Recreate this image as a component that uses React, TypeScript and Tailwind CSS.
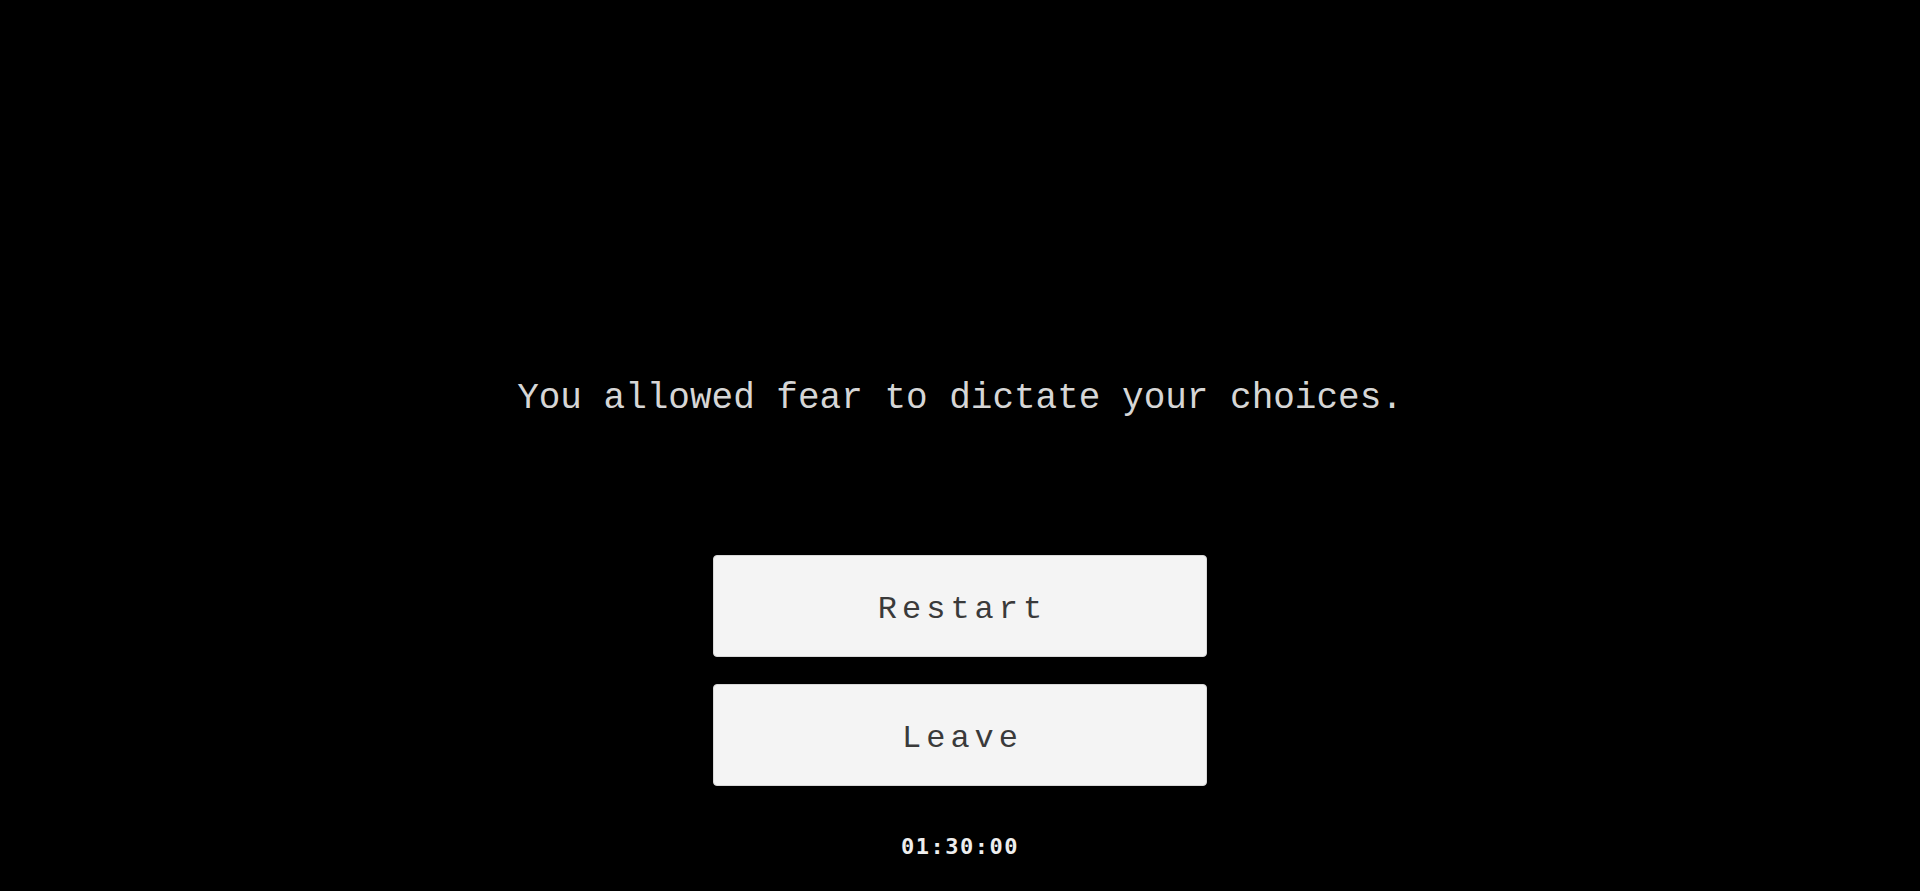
export default function App() {
  return (
    <div className="min-h-screen w-full bg-black flex flex-col items-center font-['Liberation_Mono',monospace]">
      <h1 className="mt-[379px] text-[36px] leading-[40px] font-normal text-[#d6d6d6] tracking-[0px]">
        You allowed fear to dictate your choices.
      </h1>

      <div className="mt-[136px] flex flex-col gap-[27px]">
        <button className="w-[494px] h-[102px] rounded-[4px] bg-[#f4f4f4] border border-[#d8d8d8] pt-[7px] pl-[5px] text-[32px] text-[#3a3a3a] tracking-[5px]">
          Restart
        </button>
        <button className="w-[494px] h-[102px] rounded-[4px] bg-[#f4f4f4] border border-[#d8d8d8] pt-[7px] pl-[5px] text-[32px] text-[#3a3a3a] tracking-[5px]">
          Leave
        </button>
      </div>

      <div className="mt-[49px] text-[22px] leading-[24px] font-bold text-[#eeeeee] tracking-[1.5px] font-['DejaVu_Sans_Mono',monospace]">
        01:30:00
      </div>
    </div>
  );
}
